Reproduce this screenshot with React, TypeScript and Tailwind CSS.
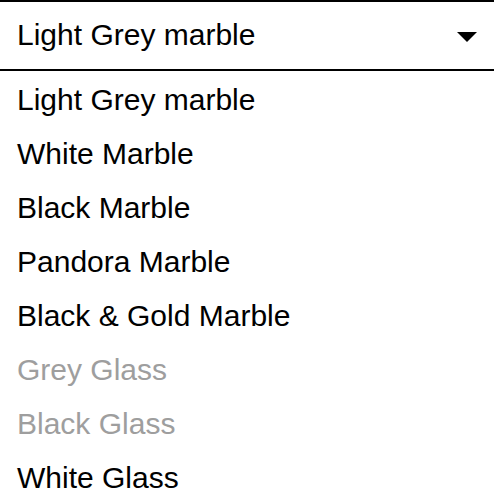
import React from "react";

const items: { label: string; disabled?: boolean }[] = [
  { label: "Light Grey marble" },
  { label: "White Marble" },
  { label: "Black Marble" },
  { label: "Pandora Marble" },
  { label: "Black & Gold Marble" },
  { label: "Grey Glass", disabled: true },
  { label: "Black Glass", disabled: true },
  { label: "White Glass" },
];

export default function App() {
  return (
    <div
      className="w-[494px] h-[498px] bg-white overflow-hidden text-black"
      style={{ fontFamily: '"Liberation Sans", Arial, sans-serif' }}
    >
      <div className="flex items-start justify-between border-y-2 border-black pl-[17px] pr-[17px] pt-[18px] pb-[19px]">
        <span className="text-[30px] leading-[30px]">Light Grey marble</span>
        <svg width="20" height="10" viewBox="0 0 20 10" className="mt-[12px]">
          <path d="M0 0 L20 0 L10 10 Z" fill="#000" />
        </svg>
      </div>
      <ul className="flex flex-col pt-[2px]">
        {items.map((it) => (
          <li
            key={it.label}
            className={`h-[54px] flex items-center pl-[17px] text-[30px] leading-[30px] ${
              it.disabled ? "text-[#9e9e9e]" : "text-black"
            }`}
          >
            {it.label}
          </li>
        ))}
      </ul>
    </div>
  );
}
